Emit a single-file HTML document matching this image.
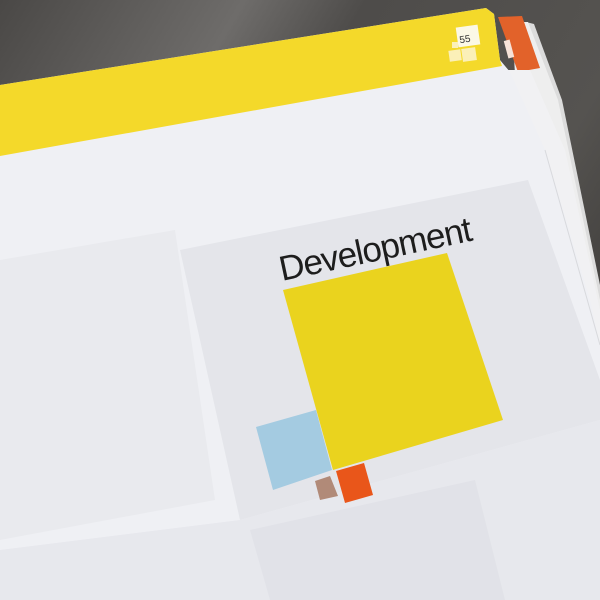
<!DOCTYPE html>
<html><head><style>
html,body{margin:0;padding:0;width:600px;height:600px;overflow:hidden;background:#4a4846}
svg{display:block}
</style></head><body>
<svg width="600" height="600" viewBox="0 0 600 600" xmlns="http://www.w3.org/2000/svg">
<defs>
<linearGradient id="bg" x1="0" y1="0" x2="1" y2="0.6">
<stop offset="0" stop-color="#4a4846"/><stop offset="0.3" stop-color="#6e6c6a"/><stop offset="0.45" stop-color="#4e4c4a"/><stop offset="0.8" stop-color="#555350"/><stop offset="1" stop-color="#3e3c3a"/>
</linearGradient>
</defs>
<rect width="600" height="600" fill="url(#bg)"/>
<!-- page stack right -->
<polygon points="526,22 534,24 562,100 600,285 600,600 560,600" fill="#dcdcdc"/>
<polygon points="512,22 528,22 558,100 600,300 600,600 545,600" fill="#eeeeee"/>
<polygon points="498,17 522,16 540,68 518,72" fill="#e2622a"/>
<rect x="506" y="40" width="6" height="18" fill="#f6e2d8" transform="rotate(-15 509 49)"/>
<polygon points="505,70 530,70 565,150 600,310 600,600 560,600" fill="#f1f1f3"/>
<!-- main page -->
<polygon points="0,85 486,8 494,14 500,60 510,72 545,150 590,300 600,345 600,600 0,600" fill="#eff0f4"/>
<line x1="545" y1="150" x2="600" y2="345" stroke="#d8d9dd" stroke-width="1"/>
<!-- yellow band -->
<polygon points="0,85 486,8 494,14 500,60 502,66 0,156" fill="#f4d92a"/>
<!-- page number -->
<rect x="457" y="26" width="22" height="20" fill="#fbf8e6" transform="rotate(-8 468 36)"/>
<text x="459" y="42" font-family="Liberation Sans, sans-serif" font-size="10" fill="#333" transform="rotate(-8 468 36)">55</text>
<rect x="449" y="50" width="12" height="11" fill="#fbf0b8" transform="rotate(-8 455 55)"/>
<rect x="462" y="48" width="14" height="13" fill="#fbf0b8" transform="rotate(-8 469 54)"/>
<rect x="452" y="42" width="6" height="6" fill="#fbf0b8"/>
<!-- gray panels -->
<polygon points="180,250 528,180 600,380 600,420 240,520" fill="#e4e5ea"/>
<polygon points="0,550 240,520 600,420 600,600 0,600" fill="#e7e8ed"/>
<polygon points="250,530 475,480 505,600 270,600" fill="#e1e2e8"/>
<polygon points="0,260 175,230 215,500 0,540" fill="#e9eaee"/>
<!-- text -->
<text x="282" y="281" font-family="Liberation Sans, sans-serif" font-size="35" fill="#1d1d1d" transform="rotate(-12 282 281)" letter-spacing="-1">Development</text>
<!-- squares -->
<polygon points="283,290 447,253 503,420 333,470" fill="#ead31e"/>
<polygon points="256,427 316,410 332,470 273,490" fill="#a4cbe1"/>
<polygon points="315,481 330,476 338,496 320,500" fill="#b18a78"/>
<polygon points="336,471 364,463 373,495 345,503" fill="#e9561a"/>
</svg>
</body></html>
